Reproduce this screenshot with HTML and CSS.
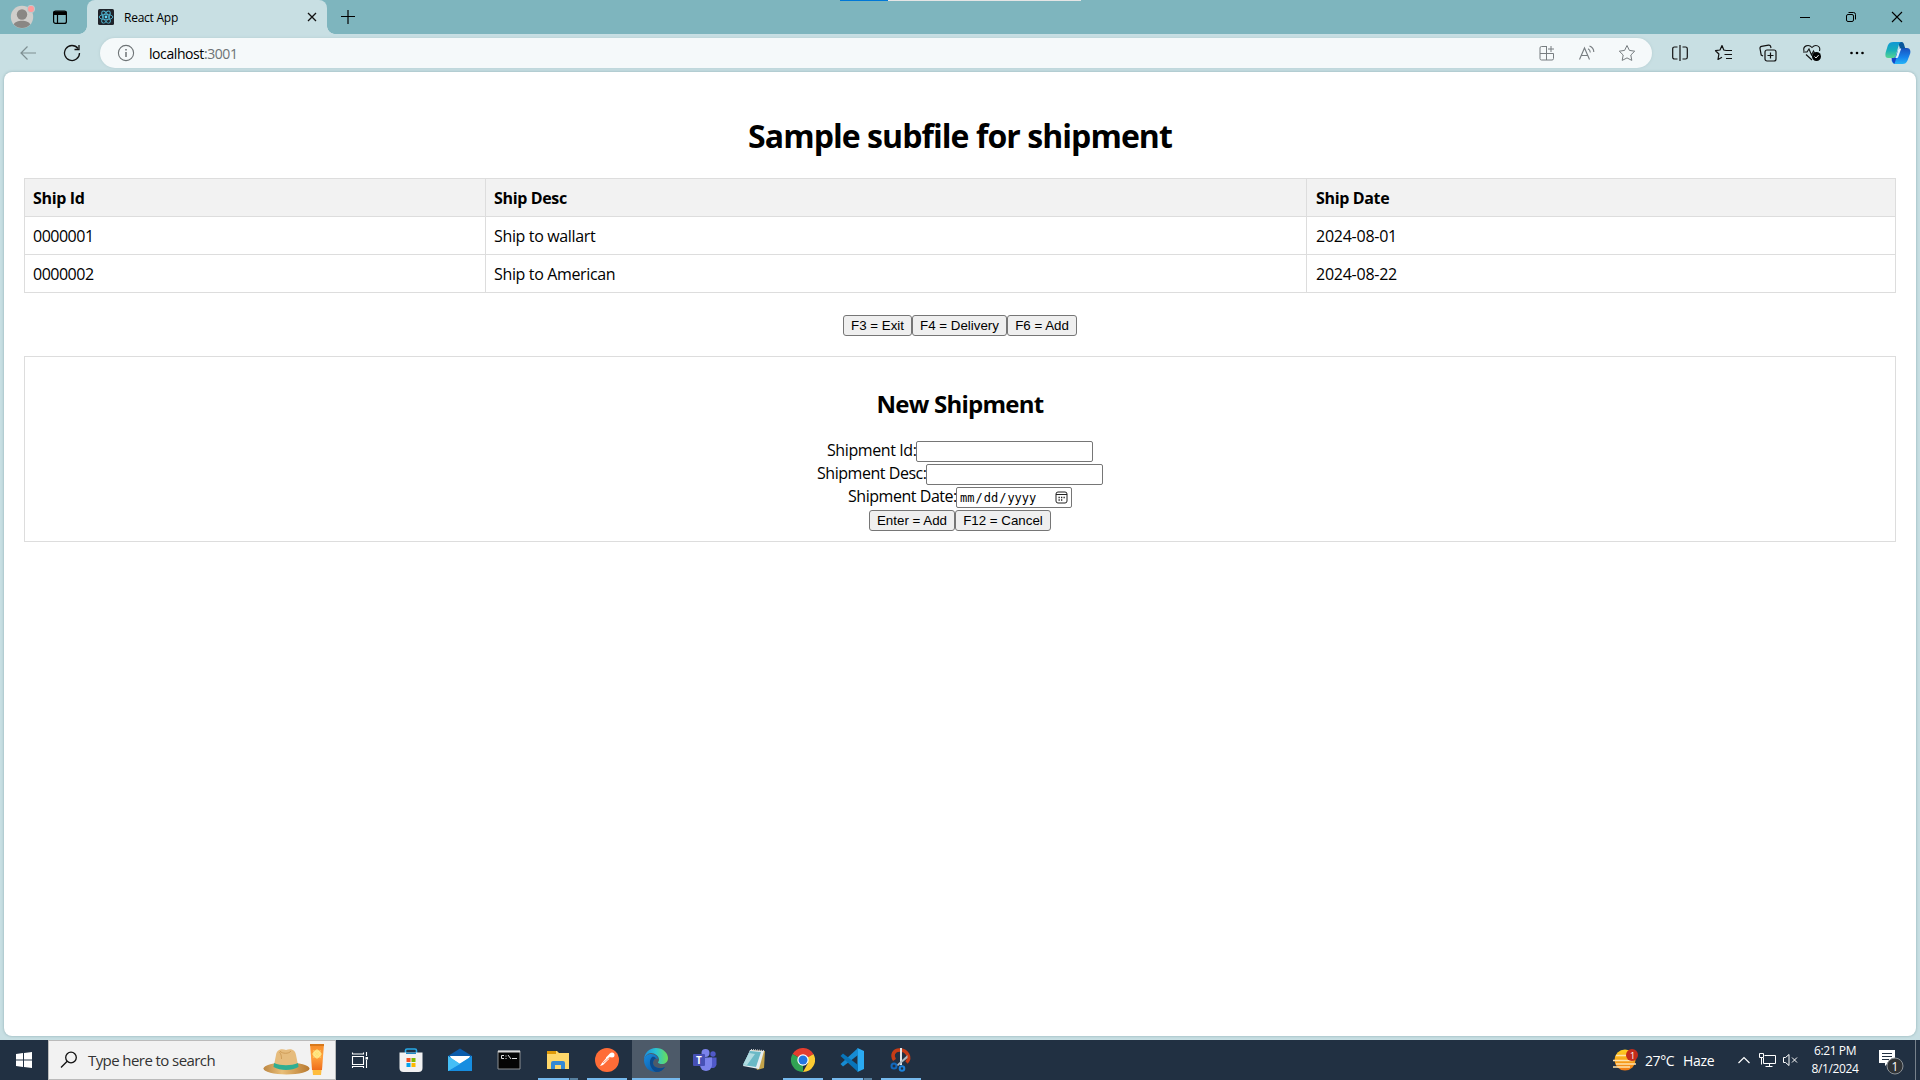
FILE: index.html
```html
<!DOCTYPE html>
<html lang="en">
<head>
<meta charset="utf-8">
<title>React App</title>
<link rel="stylesheet" href="styles.css">
</head>
<body>
<div class="screen">
  <header class="tabstrip">
    <svg class="avatar" width="26" height="26" viewBox="0 0 26 26"><circle cx="12" cy="14" r="11.2" fill="#d0cecb"/><circle cx="12" cy="11.5" r="5.2" fill="#8a8784"/><path d="M3.8 21.5c1.600-5 14.800-5 16.400 0a11.200 11.200 0 0 1-16.400 0z" fill="#8a8784"/><circle cx="21" cy="6" r="3.700" fill="#ff9c9c" stroke="#b7ced1"/></svg>
    <svg class="tab-actions" width="16" height="16" viewBox="0 0 16 16" fill="none" stroke="#000" stroke-width="1.200"><rect x="1.600" y="2.100" width="12.800" height="12.300" rx="2"/><path d="M2 3h12v2.500H2z" fill="#000"/><path d="M5.500 5.500V14"/></svg>
    <div class="tab">
      <svg width="16" height="16" viewBox="0 0 16 16"><rect width="16" height="16" rx="1.500" fill="#20232a"/><g fill="none" stroke="#4fb4d0" stroke-width=".9"><ellipse cx="8" cy="8" rx="6.800" ry="2.700"/><ellipse cx="8" cy="8" rx="6.800" ry="2.700" transform="rotate(60 8 8)"/><ellipse cx="8" cy="8" rx="6.800" ry="2.700" transform="rotate(120 8 8)"/></g><circle cx="8" cy="8" r="1.400" fill="#61dafb"/></svg>
      <span class="tab-title">React App</span>
      <svg class="tab-close" width="10" height="10" viewBox="0 0 10 10" stroke="#111" stroke-width="1.300"><path d="M1 1l8 8M9 1l-8 8"/></svg>
    </div>
    <svg class="tab-new" width="14" height="14" viewBox="0 0 14 14" stroke="#000" stroke-width="1.200"><path d="M7 0v14M0 6.500h14"/></svg>
    <div class="share-bar"><i></i></div>
    <div class="window-buttons">
      <svg width="46" height="34" viewBox="0 0 46 34"><path d="M18 17.500h10" stroke="#000"/></svg>
      <svg width="46" height="34" viewBox="0 0 46 34" fill="none" stroke="#000"><rect x="18.500" y="14.500" width="7" height="7" rx="1.500"/><path d="M20.500 12.500h5a2 2 0 0 1 2 2v5"/></svg>
      <svg width="46" height="34" viewBox="0 0 46 34"><path d="M18 12l10 10M28 12L18 22" stroke="#000" stroke-width="1.100"/></svg>
    </div>
  </header>

  <nav class="toolbar">
    <svg class="back" width="16" height="14" viewBox="0 0 16 14" fill="none" stroke="#7e8f92" stroke-width="1.200"><path d="M16 7H1M7.500.5L1 7l6.500 6.500"/></svg>
    <svg class="reload" width="18" height="18" viewBox="0 0 18 18" fill="none" stroke="#111" stroke-width="1.300"><path d="M16.500 9A7.500 7.500 0 1 1 15 4.500"/><path d="M16 1v4.500h-4.500"/></svg>
    <div class="address">
      <svg width="18" height="18" viewBox="0 0 18 18" fill="none" stroke="#6d7375"><circle cx="9" cy="9" r="7.600" stroke-width="1.100"/><path d="M9 8v5M9 5v1.500" stroke-width="1.500"/></svg>
      <span class="url">localhost<span class="port">:3001</span></span>
      <div class="address-icons">
        <svg width="18" height="18" viewBox="0 0 18 18" fill="none" stroke="#777d80"><path d="M9 2.500H3.500a1.500 1.500 0 0 0-1.500 1.500v10.500a1.500 1.500 0 0 0 1.500 1.500H14a1.500 1.500 0 0 0 1.500-1.500V9.500H2M8.500 2.500V16M13 2v6M10 5h6"/></svg>
        <svg width="18" height="18" viewBox="0 0 18 18" fill="none" stroke="#777d80" stroke-width="1.100"><path d="M1.500 15.500L6.500 4l5 11.500M3.300 11.500h6.500M10 4.800c1.500.7 2.300 2 2.300 3.700M11.500 2c2.500 1 4.300 3.500 4.300 6"/></svg>
        <svg width="18" height="18" viewBox="0 0 18 18" fill="none" stroke="#777d80" stroke-linejoin="round"><path d="M9 1.500l2.400 4.900 5.300.8-3.900 3.800 1 5.400L9 13.900l-4.800 2.500 1-5.400L1.300 7.200l5.300-.8z"/></svg>
      </div>
    </div>
    <div class="tools">
      <svg width="20" height="20" viewBox="0 0 20 20" fill="none" stroke="#111" stroke-width="1.200"><path d="M7.500 4H4.500A1.800 1.800 0 0 0 2.700 5.800v8.400A1.800 1.800 0 0 0 4.500 16h3M12.500 4h3a1.800 1.800 0 0 1 1.800 1.800v8.400a1.800 1.800 0 0 1-1.800 1.800h-3M10 2v16"/></svg>
      <svg width="20" height="20" viewBox="0 0 20 20" fill="none" stroke="#111" stroke-width="1.200" stroke-linejoin="round"><path d="M12 7.500l-2.200-.5L8 2.500 6 7l-4.500.7 3.400 3.300-.9 5.500L8 14.300M12 7.500h6M10.500 11.500H18M12 15.500h6"/></svg>
      <svg width="20" height="20" viewBox="0 0 20 20" fill="none" stroke="#111" stroke-width="1.200"><rect x="7" y="7" width="11" height="11" rx="2"/><path d="M12.500 9.500v6M9.500 12.500h6M5 13l-1.800-1L2 5.500c-.2-1 .5-2 1.500-2.200l7-1.200c1-.1 2 .4 2.200 1.500L13 5"/></svg>
      <svg width="20" height="20" viewBox="0 0 20 20" fill="none" stroke="#111" stroke-width="1.100"><path d="M2 8C.5 3 6.500.5 10 4.500 13.500.5 19 3 17.500 8M1 9h4l2-3 2.500 6 2-4 1 2M4 11.500L10 17"/><circle cx="14.500" cy="13.500" r="4.500" fill="#000" stroke="none"/><path d="M12.500 13.500l1.500 1.500 2.700-3" stroke="#fff" stroke-width=".9"/></svg>
      <svg width="20" height="20" viewBox="0 0 20 20"><circle cx="4.500" cy="10" r="1.300"/><circle cx="10" cy="10" r="1.300"/><circle cx="15.500" cy="10" r="1.300"/></svg>
    </div>
    <svg class="copilot" width="26" height="24" viewBox="0 0 26 24"><defs><linearGradient id="cg1" x2="0" y2="1"><stop stop-color="#1097d5"/><stop offset=".5" stop-color="#17aebb"/><stop offset="1" stop-color="#58d591"/></linearGradient><linearGradient id="cg2" x2="0" y2="1"><stop stop-color="#1950bd"/><stop offset=".6" stop-color="#1686ed"/><stop offset="1" stop-color="#26b4f6"/></linearGradient></defs><path d="M8 17l2-1 3.500-8 2-1H22c3 0 4 3 3 6l-2.500 6.500c-1 2.500-2.500 3.500-5 3.500H10c-2 0-3-2-3.500-4z" fill="url(#cg2)"/><path d="M6.500 16.500h5l-2 6.300C7.500 22 7 19.500 6.500 16.500z" fill="#1744c7"/><path d="M13 1h3.500c2 0 2.500 2 3 4l.8 2.500H15z" fill="#09579b"/><path d="M8.500 1h8c-2 .5-2.500 2-3 4l-2.700 9.500c-.5 2-1.500 2.500-3.300 2.500H3c-2.700 0-3-3-2.200-6l2-6.500C3.800 2 5.500 1 8.500 1z" fill="url(#cg1)"/><path d="M13.500 7.500h2.700l-3 8.500c-.4 1-1 1-3 1 1-.8 1.200-2 1.500-3z" fill="#e3f3fa"/></svg>
  </nav>

  <main class="page">
    <h1>Sample subfile for shipment</h1>
    <table class="shipments">
      <colgroup><col class="col-id"><col class="col-desc"><col class="col-date"></colgroup>
      <thead><tr><th>Ship Id</th><th>Ship Desc</th><th>Ship Date</th></tr></thead>
      <tbody>
        <tr><td class="num">0000001</td><td>Ship to wallart</td><td class="day-cell">2024-08-01</td></tr>
        <tr><td class="num">0000002</td><td>Ship to American</td><td class="day-cell">2024-08-22</td></tr>
      </tbody>
    </table>
    <div class="actions"><button class="b-exit">F3 = Exit</button><button class="b-delivery">F4 = Delivery</button><button class="b-add">F6 = Add</button></div>
    <section class="new-shipment">
      <h2>New Shipment</h2>
      <div class="field"><label class="l-id">Shipment Id:</label><input type="text"></div>
      <div class="field"><label class="l-desc">Shipment Desc:</label><input type="text"></div>
      <div class="field"><label class="l-date">Shipment Date:</label><span class="date"><span>mm</span><b>/</b><span>dd</span><b>/</b><span>yyyy</span>
        <svg width="13" height="13" viewBox="0 0 13 13" fill="none" stroke="#222"><rect x="1" y="1" width="11" height="11" rx="2"/><path d="M1 3.500h11"/><path d="M3.500 6.500h1.300M6 6.500h1.300M8.500 6.500h1.300M3.500 9h1.300M6 9h1.300" stroke-width="1.300"/></svg></span></div>
      <div class="field"><button class="b-enter">Enter = Add</button><button class="b-cancel">F12 = Cancel</button></div>
    </section>
  </main>

  <footer class="taskbar">
    <div class="start"><svg width="16" height="16" viewBox="0 0 16 16" fill="#fff"><path d="M0 2l7-1v6.500H0zM8 .9L16 0v7.500H8zM0 8.500h7V15l-7-1zM8 8.500h8V16l-8-1z"/></svg></div>
    <div class="search">
      <svg width="18" height="18" viewBox="0 0 18 18" fill="none" stroke="#111" stroke-width="1.300"><circle cx="11" cy="6.500" r="5.300"/><path d="M7.200 10.300L1 16.500"/></svg>
      <span>Type here to search</span>
      <svg class="hat" width="62" height="34" viewBox="0 0 62 34"><defs><linearGradient id="hg" x2="1"><stop stop-color="#bd8743"/><stop offset=".4" stop-color="#e9bf79"/><stop offset="1" stop-color="#b8792f"/></linearGradient><linearGradient id="tg" x2="0" y2="1"><stop stop-color="#f58a27"/><stop offset=".5" stop-color="#ffa23d"/><stop offset="1" stop-color="#ef6d1c"/></linearGradient></defs><ellipse cx="23.500" cy="25.500" rx="23" ry="6" fill="url(#hg)"/><path d="M11 22l2-10c1-6 6-6.500 10-5 4-1.500 9-1 10 5l2 10c-6 5-18 5-24 0z" fill="#e6bc7d"/><path d="M17 8c2 3 9 3 11 0M16.500 9c1.500 2 2 4 2 7" stroke="#c9954f" stroke-width=".8" fill="none"/><path d="M11 20c7 3 17 3 24 0l.5 4c-7 4-18 4-25 0z" fill="#2fae92"/><path d="M47 1h14l-2 26H49z" fill="url(#tg)"/><path d="M47 1h14v2H47z" fill="#d87819"/><circle cx="54" cy="11" r="4" fill="#ffe88e"/><path d="M54 6v10M49 11h10M50.500 7.500l7 7M57.500 7.500l-7 7" stroke="#ffe072"/><path d="M49.500 27h9l-.5 5h-8z" fill="#ffbd3e"/></svg>
    </div>
    <div class="apps">
      <div class="app task-view"><svg width="24" height="24" viewBox="0 0 24 24" fill="none" stroke="#fff" stroke-width="1.100"><path d="M4.500 8.500h11v8h-11zM4.500 4.500V6h11V4.500M4.500 20v-1.500h11V20M18.500 4v4M18.500 12v8"/><path d="M17.500 9h2.500v2.500h-2.500z" fill="#fff" stroke="none"/></svg></div>
      <div class="app"><svg width="24" height="24" viewBox="0 0 24 24"><path d="M6.500 6V2.500A1.500 1.500 0 0 1 8 1h8a1.500 1.500 0 0 1 1.500 1.500V6" fill="none" stroke="#27a9e8" stroke-width="1.600"/><path d="M.5 4.500h23V20a4 4 0 0 1-4 4h-15a4 4 0 0 1-4-4z" fill="#f1f1f2"/><path d="M7 4.500h10V6H7z" fill="#1c87c3"/><path d="M7.500 10h4v4h-4z" fill="#f04f25"/><path d="M12.500 10h4v4h-4z" fill="#80b900"/><path d="M7.500 15h4v4h-4z" fill="#00a3ee"/><path d="M12.500 15h4v4h-4z" fill="#fdb900"/></svg></div>
      <div class="app"><svg width="26" height="24" viewBox="0 0 26 24"><path d="M1 8L13 .5 25 8v7H1z" fill="#0b5cab"/><path d="M3 8h20l-2 5-8 5-8-5z" fill="#fff"/><path d="M1 8l12 8 12-8v15H1z" fill="#34b4f1"/><path d="M1 23l24-15v15z" fill="#168de0"/><path d="M1 8l12 8-12 7z" fill="#45bff6"/></svg></div>
      <div class="app"><svg width="24" height="22" viewBox="0 0 24 22"><path d="M1 2h22v18H1z" fill="#050505" stroke="#8d9093"/><path d="M1 1.500h22v2H1z" fill="#d9d9d9"/><path d="M7 6.500H4.500v3H7M9 6.500v1M9 9v1M11 6l3 4M15 9.500h5" fill="none" stroke="#ddd"/></svg></div>
      <div class="app open wide"><svg width="24" height="22" viewBox="0 0 24 22"><path d="M1 2h10l2 2h10v16H1z" fill="#ffd76a"/><path d="M1 2h9v3H1z" fill="#e09a08"/><path d="M5 20v-6a2 2 0 0 1 2-2h10a2 2 0 0 1 2 2v6h-4v-4H9v4z" fill="#3488d4"/></svg></div>
      <div class="app open"><svg width="24" height="24" viewBox="0 0 24 24"><circle cx="12" cy="12" r="12" fill="#ff6c37"/><path d="M5 18l3-1 6-6-2-2-5 6z" fill="#fff"/><path d="M12 10.500l4-4" stroke="#fff" stroke-width="3"/><circle cx="17" cy="7" r="2.500" fill="#fff"/><path d="M8 15l7-6" stroke="#ff6c37" stroke-width=".7"/></svg></div>
      <div class="app open active"><svg width="24" height="24" viewBox="0 0 24 24"><defs><linearGradient id="eg"><stop stop-color="#198be0"/><stop offset=".5" stop-color="#2bc3d2"/><stop offset="1" stop-color="#6bde55"/></linearGradient><linearGradient id="eb" x2="1" y2="1"><stop stop-color="#178be0"/><stop offset="1" stop-color="#0d5197"/></linearGradient></defs><path d="M0 12C0 5 5 0 12 0s12 5 12 10c0 4-3 6-6 6-2 0-4-.6-4-1.500 0-.6 1-1 1-3C15 8 11 5 7 5c-3 0-6 3-7 7z" fill="url(#eg)"/><path d="M0 12c1-4 4-6 7-6 4 0 7 3 7 5-3-1-5 1-5 4 0 4 6 7 12 4-2 3-5 5-9 5C5 24 0 19 0 12z" fill="url(#eb)"/><path d="M8 9c-4 4-2 12 4 15 4 0 7-2 9-5-6 3-12 0-12-4 0-2 1-4 3-4.500C11 9 9.500 8.500 8 9z" fill="#0d4b8d"/></svg></div>
      <div class="app"><svg width="24" height="24" viewBox="0 0 24 24"><circle cx="12.500" cy="5" r="4" fill="#7b83eb"/><circle cx="20" cy="6" r="2.700" fill="#5059c9"/><path d="M16 9.500h7.500v7a4 4 0 0 1-6 3z" fill="#5059c9"/><path d="M7 9.500h12V17a6 6 0 0 1-12 0z" fill="#7b83eb"/><rect x="0" y="6" width="12" height="12" rx="1" fill="#4650b5"/><text x="3" y="15.500" class="teams-t">T</text></svg></div>
      <div class="app"><svg width="24" height="24" viewBox="0 0 24 24"><path d="M9 2l14 1-1 17-7 2z" fill="#c3a34a"/><path d="M8 2l14 1-5 18L1 18z" fill="#e6edf0"/><path d="M8 3l11 1-5 15L1 17z" fill="#6ab9c6"/><path d="M7 5l6 1-8 11-4-.5z" fill="#b0dce2"/><path d="M9 1.500l13 1" stroke="#ddd" stroke-dasharray="1"/></svg></div>
      <div class="app open"><svg width="24" height="24" viewBox="0 0 24 24"><path d="M12 12L1.600 6A12 12 0 0 1 22.400 6z" fill="#e43e2f"/><path d="M12 12v12A12 12 0 0 1 1.600 6z" fill="#31a353"/><path d="M12 12L22.400 6A12 12 0 0 1 12 24l5-9z" fill="#fccb32"/><path d="M12 6h10.400L17 9z" fill="#e43e2f"/><circle cx="12" cy="12" r="5.700" fill="#fff"/><circle cx="12" cy="12" r="4.500" fill="#2476df"/></svg></div>
      <div class="app open wide"><svg width="24" height="24" viewBox="0 0 24 24"><path d="M17.500 0L24 3v18l-6.500 3z" fill="#2aaaf2"/><path d="M18 0v7L3 18.500.5 16z" fill="#168bd2"/><path d="M18 24v-7L3 5.500.5 8z" fill="#0875ba"/></svg></div>
      <div class="app open"><svg width="24" height="24" viewBox="0 0 24 24"><path d="M5.500 12C2 7 5 2 10.500 2c7.500 0 12 7.500 7 12.500" fill="none" stroke="#c83c16" stroke-width="3.500"/><path d="M11 0h2v17h-2z" fill="#e1e5e8"/><path d="M7.500 17L18.500 7v3L9 18z" fill="#aeb9c1"/><circle cx="5" cy="18" r="2.500" fill="none" stroke="#1268bc" stroke-width="2"/><circle cx="13" cy="20.500" r="2.300" fill="none" stroke="#1d83dc" stroke-width="2"/></svg></div>
    </div>
    <div class="tray">
      <svg class="haze" width="26" height="24" viewBox="0 0 26 24"><defs><linearGradient id="sg" x2="0" y2="1"><stop stop-color="#ffd022"/><stop offset="1" stop-color="#f07913"/></linearGradient></defs><circle cx="12" cy="12" r="10.500" fill="url(#sg)"/><path d="M3 7.500h10M0 12.500h20M3 16h20M0 19h17" stroke="#ffe2ac" stroke-width="1.500"/><circle cx="19" cy="7" r="6" fill="#c42b1c"/><text x="17" y="10.500" class="badge-text">1</text></svg>
      <span class="temp">27°C</span><span class="weather">Haze</span>
      <svg class="chev" width="12" height="8" viewBox="0 0 12 8" fill="none" stroke="#fff" stroke-width="1.200"><path d="M.5 7L6 1.500 11.500 7"/></svg>
      <svg class="net" width="17" height="16" viewBox="0 0 17 16" fill="none" stroke="#fff"><path d="M5.500 3.500h11v8h-12V6M10.500 11.500v3M6.500 14.500h7M.5 1.500h4v4h-4zM2.500 5.500v7"/></svg>
      <svg class="vol" width="15" height="14" viewBox="0 0 15 14" fill="none" stroke="#fff"><path d="M.5 4.500h2l3.500-3v11l-3.500-3h-2zM9 4.500l5 5M14 4.500l-5 5"/></svg>
      <div class="clock"><span class="time">6:21 PM</span><span class="day">8/1/2024</span></div>
      <svg class="notif" width="25" height="26" viewBox="0 0 25 26"><path d="M0 1h16v13H9l-3 3v-3H0z" fill="#fff"/><path d="M3 4.500h10M3 7.500h10M3 10.500h7" stroke="#233142"/><circle cx="16" cy="17" r="8" fill="#303336" stroke="#8c9297"/><text x="12.500" y="21.500" class="notif-text">1</text></svg>
      <i class="peek"></i>
    </div>
  </footer>
</div>
</body>
</html>
```
FILE: styles.css
```css
* { box-sizing: border-box; }
body { margin: 0; font-family: "Open Sans", "Noto Sans", sans-serif; color: #000; }
svg { display: block; flex: none; }
.screen { width: 1920px; height: 1080px; display: flex; flex-direction: column; background: #c8dfe3; overflow: hidden; }

.tabstrip { position: relative; height: 34px; display: flex; background: #7eb5be; }
.avatar { margin-left: 10px; margin-top: 3px; }
.tab-actions { margin: 9px 0 0 16px; }
.tab { position: relative; display: flex; align-items: center; width: 240px; height: 34px; margin-left: 19px; padding: 0 10px 0 11px; background: #c8dfe3; border-radius: 8px 8px 0 0; }
.tab::before, .tab::after { content: ""; position: absolute; bottom: 0; width: 8px; height: 8px; }
.tab::before { left: -8px; background: radial-gradient(circle at 0 0, #7eb5be 7.500px, #c8dfe3 8px); }
.tab::after { right: -8px; background: radial-gradient(circle at 100% 0, #7eb5be 7.500px, #c8dfe3 8px); }
.tab-title { margin-left: 10px; font-size: 12px; letter-spacing: -.25px; }
.tab-close { margin-left: auto; }
.tab-new { margin: 10px 0 0 14px; }
.share-bar { position: absolute; left: 840px; top: 0; width: 241px; height: 1px; background: #e5e5e5; }
.share-bar i { display: block; width: 48px; height: 1px; background: #0078d7; }
.window-buttons { display: flex; margin-left: auto; }

.toolbar { height: 38px; display: flex; align-items: center; }
.back { margin-left: 20px; }
.reload { margin-left: 27px; }
.address { display: flex; align-items: center; width: 1552px; height: 30px; margin-left: 19px; padding-left: 17px; border-radius: 15px; background: #f5f9fa; box-shadow: 0 0 3px #b2cbcf; }
.url { margin-left: 14px; font-size: 14px; letter-spacing: -.42px; }
.port { color: #6d7375; }
.address-icons { display: flex; gap: 22px; margin-left: auto; margin-right: 16px; }
.tools { display: flex; gap: 24.300px; margin-left: 17.500px; }
.copilot { margin-left: auto; margin-right: 9px; }

.page { height: 964px; margin: 0 4px; padding: 0 20px; background: #fff; border-radius: 8px; box-shadow: 0 0 3px #8faeb3; text-align: center; font-size: 16px; }
h1 { margin: 0; padding-top: 42px; height: 106px; font-size: 32px; line-height: 43px; letter-spacing: -.94px; }
.shipments { width: 1871px; border-collapse: collapse; table-layout: fixed; text-align: left; }
.col-id { width: 461px; }
.col-desc { width: 821px; }
.col-date { width: 589px; }
.shipments th, .shipments td { height: 38px; padding: 1px 8px 0; border: 1px solid #ddd; line-height: 21px; letter-spacing: -.35px; font-size: 16px; }
.shipments th { background: #f2f2f2; }
.shipments .num { letter-spacing: -.5px; }
.shipments .day-cell { letter-spacing: -.25px; }
.shipments th:last-child, .shipments .day-cell { padding-left: 9px; }
.actions { display: flex; justify-content: center; margin-top: 22px; height: 21px; }
button { height: 21px; padding: 0; border: 1px solid #767676; border-radius: 3px; background: #efefef; font: 13.333px "Liberation Sans", Arial, sans-serif; color: #000; }
.b-exit { width: 69px; }
.b-delivery { width: 95px; }
.b-add { width: 70px; }
.b-enter { width: 86px; }
.b-cancel { width: 96px; }
.new-shipment { height: 186px; margin-top: 20px; border: 1px solid #ddd; }
h2 { margin: 0; padding-top: 31px; height: 82px; font-size: 24px; line-height: 32px; letter-spacing: -.75px; }
.field { display: flex; justify-content: center; height: 23px; padding-top: 2px; }
label { height: 21px; line-height: 19px; text-align: left; white-space: nowrap; }
.l-id { width: 89px; letter-spacing: -.4px; }
.l-desc { width: 109px; letter-spacing: -.46px; }
.l-date { width: 108px; letter-spacing: -.46px; }
input { width: 177px; height: 21px; margin: 0; padding: 1px 2px; border: 1px solid #767676; border-radius: 2px; }
.date { display: flex; align-items: center; gap: 1px; width: 116px; height: 21px; padding: 0 3px; border: 1px solid #767676; border-radius: 2px; font: 12px "DejaVu Sans Mono", monospace; }
.date b { font-weight: 400; }
.date svg { margin-left: auto; }

.taskbar { display: flex; height: 40px; margin-top: 4px; background: #213042; color: #fff; }
.start { width: 48px; padding: 12px 16px; }
.search { display: flex; align-items: center; width: 288px; padding: 0 10px 0 11px; background: #f2f2f2; border: 1px solid #bbb; color: #333; font-size: 15px; }
.search span { margin-left: 10px; letter-spacing: -.58px; }
.hat { margin-left: auto; }
.apps { display: flex; gap: 1px; }
.app { position: relative; display: flex; justify-content: center; align-items: center; width: 48px; height: 40px; }
.task-view { margin-right: 2px; }
.active { background: #4d5a69; }
.open::after { content: ""; position: absolute; left: 4px; right: 4px; bottom: 0; height: 2px; background: #76b9ed; }
.active::after { left: 0; right: 0; }
.wide::after { background: linear-gradient(90deg, #76b9ed 31px, #33475b 31px, #33475b 32px, #57809f 32px); }
.teams-t { font: bold 10px "Open Sans", sans-serif; fill: #fff; }
.badge-text { font: 9px "Open Sans", sans-serif; fill: #fff; }
.tray { display: flex; align-items: center; margin-left: auto; font-size: 14px; }
.temp { width: 38px; letter-spacing: -.4px; }
.haze { margin-right: 6px; }
.weather { width: 55px; letter-spacing: -.3px; }
.net { margin: 0 7px 0 9px; }
.clock { display: flex; flex-direction: column; width: 50px; margin: 0 19px 0 12px; text-align: center; font-size: 12px; line-height: 18px; letter-spacing: -.4px; white-space: nowrap; }
.notif { margin-top: 4px; }
.notif-text { font: 12px "Open Sans", sans-serif; fill: #fff; }
.peek { width: 1px; height: 40px; margin: 0 4px 0 11px; background: #77818b; }
```
